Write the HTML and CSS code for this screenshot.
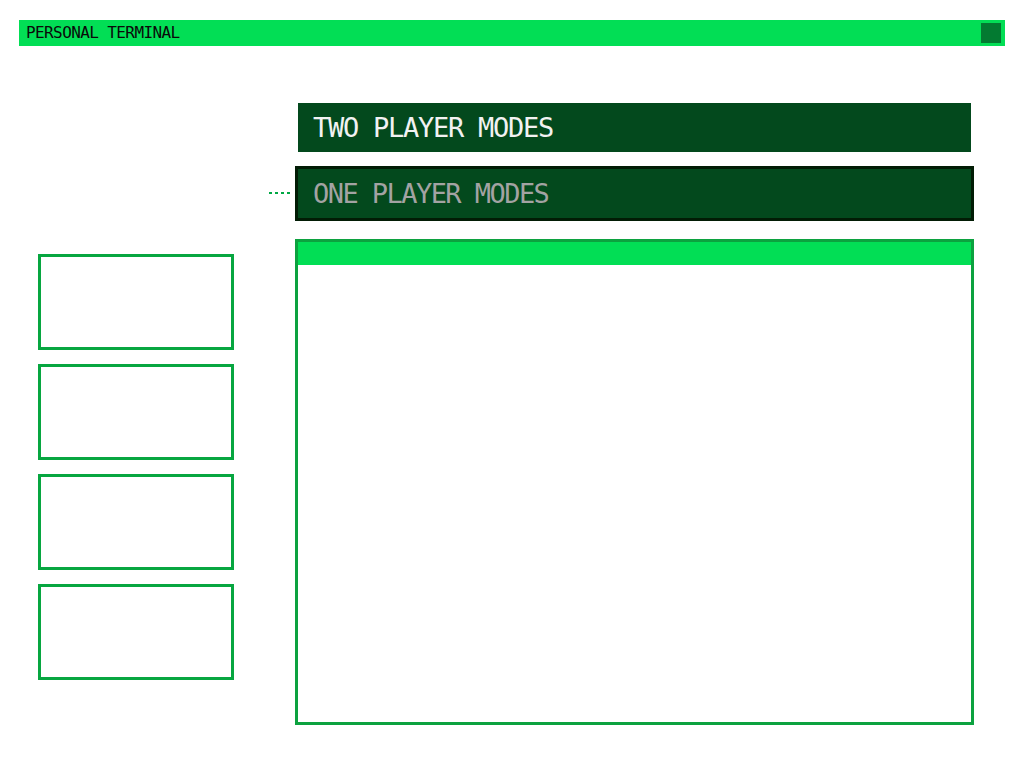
FILE: index.html
```html
<!DOCTYPE html>
<html>
<head>
<meta charset="utf-8">
<link rel="stylesheet" href="styles.css">
</head>
<body>
<div class="topbar">
  <span class="topbar-title">PERSONAL TERMINAL</span>
  <span class="topbar-square"></span>
</div>
<div class="main">
  <div class="side">
    <div class="slot"></div>
    <div class="slot"></div>
    <div class="slot"></div>
    <div class="slot"></div>
  </div>
  <div class="content">
    <div class="mode mode-two">TWO PLAYER MODES</div>
    <div class="mode mode-one"><span class="connector"></span>ONE PLAYER MODES</div>
    <div class="panel">
      <div class="panel-head"></div>
    </div>
  </div>
</div>
</body>
</html>
```

FILE: styles.css
```css
html, body {
  margin: 0;
  padding: 0;
  background: #ffffff;
}

body {
  font-family: "DejaVu Sans Mono", "Liberation Mono", monospace;
}

.topbar {
  margin: 20px 19px 0 19px;
  height: 26px;
  background: #02de55;
  display: flex;
  align-items: center;
  justify-content: space-between;
  padding: 0 4px 0 7px;
}

.topbar-title {
  font-size: 16px;
  letter-spacing: -0.6px;
  color: #0a0a0a;
  line-height: 1;
}

.topbar-square {
  width: 20px;
  height: 20px;
  background: #037a31;
}

.main {
  display: flex;
  gap: 61px;
  padding-left: 38px;
  margin-top: 57px;
}

.side {
  width: 196px;
  padding-top: 151px;
  display: flex;
  flex-direction: column;
  gap: 14px;
}

.slot {
  height: 96px;
  box-sizing: border-box;
  border: 3px solid #07a640;
}

.content {
  width: 679px;
  display: flex;
  flex-direction: column;
}

.mode {
  display: flex;
  align-items: center;
  box-sizing: border-box;
  background: #03491d;
  font-size: 27px;
  letter-spacing: -1.25px;
  white-space: nowrap;
}

.mode-two {
  margin: 0 3px;
  height: 49px;
  padding-left: 15px;
  color: #f2f2f2;
}

.mode-one {
  position: relative;
  margin-top: 14px;
  height: 55px;
  border: 3px solid #021c05;
  padding-left: 15px;
  color: #a3a3a3;
  letter-spacing: -1.55px;
}

.connector {
  position: absolute;
  left: -29px;
  top: 23px;
  width: 21px;
  height: 2px;
  background: repeating-linear-gradient(to right, #00a844 0 3px, transparent 3px 6px);
}

.panel {
  margin-top: 18px;
  height: 486px;
  box-sizing: border-box;
  border: 3px solid #0ca23f;
}

.panel-head {
  height: 23px;
  background: #02de55;
}
```
